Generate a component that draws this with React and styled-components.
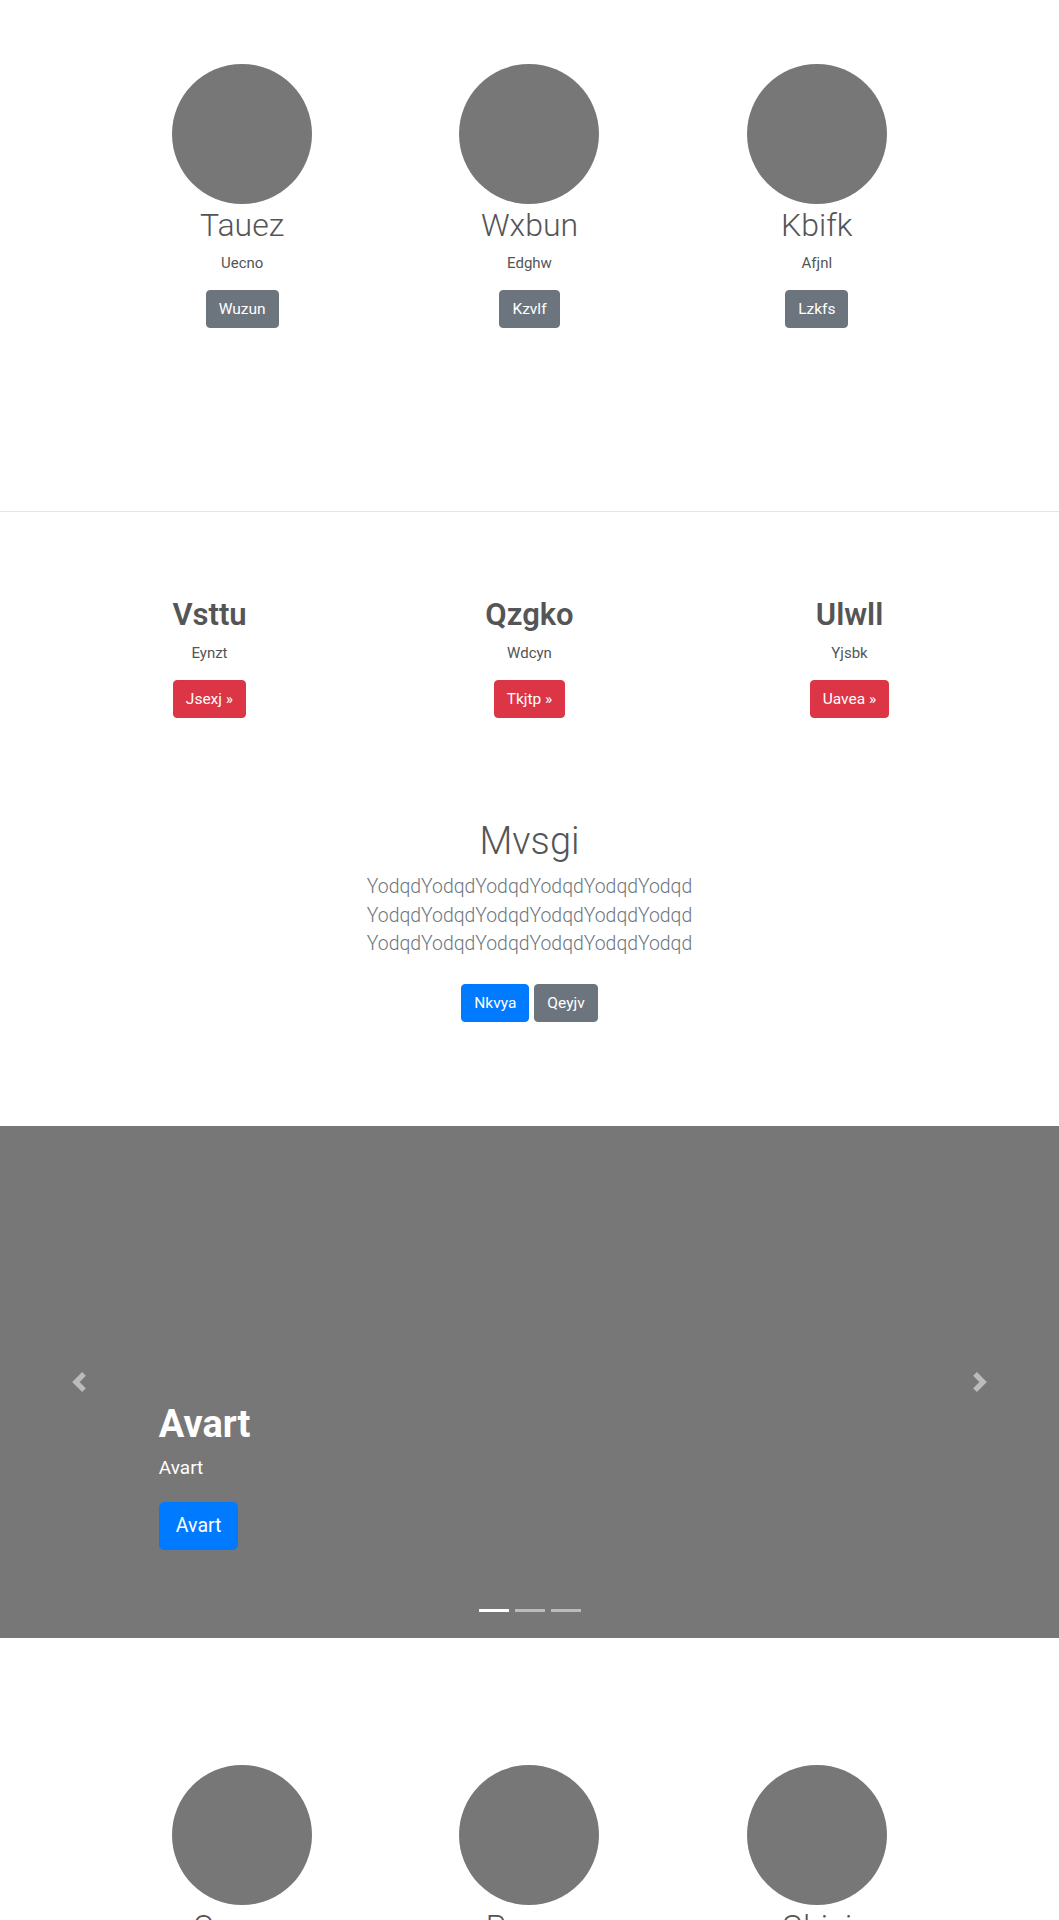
import React from 'react'
import styled, { createGlobalStyle, css } from 'styled-components'

/* GLOBAL */
const GlobalStyle = createGlobalStyle`
  * { box-sizing: border-box; }
  body {
    margin: 0;
    background: #fff;
    color: #555;
    font-family: Roboto, "Segoe UI", "Liberation Sans", Arial, sans-serif;
  }
`;

const topTeam = [
  { name: 'Tauez', note: 'Uecno', action: 'Wuzun' },
  { name: 'Wxbun', note: 'Edghw', action: 'Kzvlf' },
  { name: 'Kbifk', note: 'Afjnl', action: 'Lzkfs' },
];

const offers = [
  { name: 'Vsttu', note: 'Eynzt', action: 'Jsexj' },
  { name: 'Qzgko', note: 'Wdcyn', action: 'Tkjtp' },
  { name: 'Ulwll', note: 'Yjsbk', action: 'Uavea' },
];

const bottomTeam = [
  { name: 'Oqmvz', note: 'Rlbta', action: 'Hnews' },
  { name: 'Prawe', note: 'Ixdum', action: 'Fqcol' },
  { name: 'Ghiaj', note: 'Vutpe', action: 'Mzrok' },
];

const App = () => {
  return (
    <>
      <GlobalStyle />
      <Page>
        <TeamSection>
          <Grid $width={862}>
            {topTeam.map((m) => (
              <Col key={m.name}>
                <Avatar />
                <MemberName>{m.name}</MemberName>
                <Note>{m.note}</Note>
                <Button $variant="secondary">{m.action}</Button>
              </Col>
            ))}
          </Grid>
        </TeamSection>

        <Divider />

        <OfferSection>
          <Grid $width={960}>
            {offers.map((o) => (
              <Col key={o.name}>
                <OfferName>{o.name}</OfferName>
                <Note $gap={9}>{o.note}</Note>
                <Button $variant="danger">{o.action} &raquo;</Button>
              </Col>
            ))}
          </Grid>
        </OfferSection>

        <Hero>
          <HeroTitle>Mvsgi</HeroTitle>
          <Lead>
            YodqdYodqdYodqdYodqdYodqdYodqd<br />
            YodqdYodqdYodqdYodqdYodqdYodqd<br />
            YodqdYodqdYodqdYodqdYodqdYodqd
          </Lead>
          <ButtonRow>
            <Button $variant="primary" $flat>Nkvya</Button>
            <Button $variant="secondary" $flat>Qeyjv</Button>
          </ButtonRow>
        </Hero>

        <Carousel>
          <Caption>
            <CaptionTitle>Avart</CaptionTitle>
            <CaptionText>Avart</CaptionText>
            <BigButton>Avart</BigButton>
          </Caption>
          <Control $side="left">
            <svg width="20" height="20" viewBox="0 0 8 8" fill="#fff">
              <path d="M5.25 0l-4 4 4 4 1.5-1.5L4.25 4l2.5-2.5L5.25 0z" />
            </svg>
          </Control>
          <Control $side="right">
            <svg width="20" height="20" viewBox="0 0 8 8" fill="#fff">
              <path d="M2.75 0l-1.5 1.5L3.75 4l-2.5 2.5L2.75 8l4-4-4-4z" />
            </svg>
          </Control>
          <Indicators>
            <Indicator $active />
            <Indicator />
            <Indicator />
          </Indicators>
        </Carousel>

        <TeamSection $top={127}>
          <Grid $width={862}>
            {bottomTeam.map((m) => (
              <Col key={m.name}>
                <Avatar />
                <MemberName>{m.name}</MemberName>
                <Note>{m.note}</Note>
                <Button $variant="secondary">{m.action}</Button>
              </Col>
            ))}
          </Grid>
        </TeamSection>
      </Page>
    </>
  )
}

/* STYLED-COMPONENTS */

const Page = styled.div`
  width: 100%;
`;

const TeamSection = styled.section`
  padding: ${(p) => p.$top || 64}px 0 183px;
`;

const Grid = styled.div`
  display: grid;
  grid-template-columns: repeat(3, 1fr);
  width: ${(p) => p.$width}px;
  margin: 0 auto;
`;

const Col = styled.div`
  display: flex;
  flex-direction: column;
  align-items: center;
  text-align: center;
`;

const Avatar = styled.div`
  width: 140px;
  height: 140px;
  border-radius: 50%;
  background: #777;
`;

const MemberName = styled.h2`
  margin: 2px 0 0;
  font-size: 32px;
  line-height: 38px;
  font-weight: 300;
  color: #555;
`;

const Note = styled.p`
  margin: ${(p) => p.$gap || 8}px 0 0;
  font-size: 15px;
  line-height: 22px;
  color: #555;
`;

const variants = {
  primary: '#007bff',
  secondary: '#6c757d',
  danger: '#dc3545',
};

const Button = styled.a`
  display: inline-block;
  margin-top: ${(p) => (p.$flat ? 0 : 16)}px;
  padding: 7px 12px;
  font-size: 15.5px;
  line-height: 22px;
  color: #fff;
  background: ${(p) => variants[p.$variant]};
  border: 1px solid ${(p) => variants[p.$variant]};
  border-radius: 4px;
  text-decoration: none;
  cursor: pointer;
`;

const Divider = styled.hr`
  margin: 0;
  height: 1px;
  border: none;
  background: #e5e5e5;
`;

const OfferSection = styled.section`
  padding-top: 84px;
`;

const OfferName = styled.h2`
  margin: 0;
  font-size: 31px;
  line-height: 37px;
  font-weight: 600;
  color: #555;
`;

const Hero = styled.section`
  padding: 100px 0 104px;
  text-align: center;
`;

const HeroTitle = styled.h1`
  margin: 0;
  font-size: 38px;
  line-height: 46px;
  font-weight: 300;
  color: #555;
`;

const Lead = styled.p`
  margin: 9px 0 0;
  font-size: 19.4px;
  line-height: 28.7px;
  font-weight: 300;
  color: #6c757d;
`;

const ButtonRow = styled.div`
  display: flex;
  justify-content: center;
  gap: 5px;
  margin-top: 25px;
`;

const Carousel = styled.div`
  position: relative;
  display: flex;
  align-items: flex-end;
  height: 512px;
  padding: 0 15% 88px;
  background: #777;
`;

const Caption = styled.div`
  color: #fff;
`;

const CaptionTitle = styled.h1`
  margin: 0;
  font-size: 38px;
  line-height: 43px;
  font-weight: 700;
`;

const CaptionText = styled.p`
  margin: 8px 0 0;
  font-size: 19px;
  line-height: 28px;
`;

const BigButton = styled.a`
  display: inline-block;
  margin-top: 20px;
  padding: 8px 16px;
  font-size: 19.5px;
  line-height: 30px;
  color: #fff;
  background: #007bff;
  border: 1px solid #007bff;
  border-radius: 5px;
  text-decoration: none;
`;

const Control = styled.div`
  position: absolute;
  top: 0;
  bottom: 0;
  ${(p) => (p.$side === 'left' ? css`left: 0;` : css`right: 0;`)}
  width: 15%;
  display: flex;
  align-items: center;
  justify-content: center;
  opacity: 0.5;
`;

const Indicators = styled.ol`
  position: absolute;
  left: 15%;
  right: 15%;
  bottom: 0;
  display: flex;
  justify-content: center;
  margin: 0 0 16px;
  padding: 0;
  list-style: none;
`;

const Indicator = styled.li`
  width: 30px;
  height: 23px;
  margin: 0 3px;
  border-top: 10px solid transparent;
  border-bottom: 10px solid transparent;
  background: #fff;
  background-clip: padding-box;
  opacity: ${(p) => (p.$active ? 1 : 0.5)};
`;

export default App;
